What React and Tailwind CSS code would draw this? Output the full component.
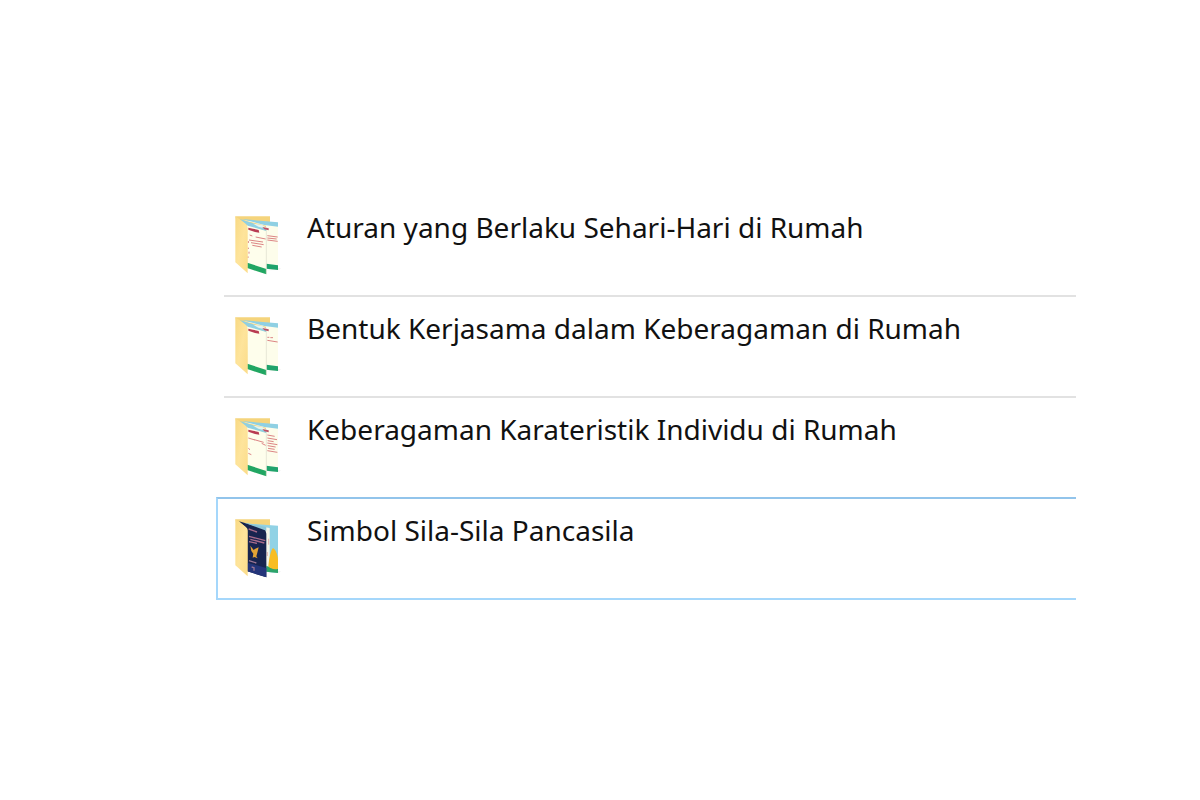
import React from "react";

const folders = [
  { name: "Aturan yang Berlaku Sehari-Hari di Rumah", preview: "rules" },
  { name: "Bentuk Kerjasama dalam Keberagaman di Rumah", preview: "teamwork" },
  { name: "Keberagaman Karateristik Individu di Rumah", preview: "traits" },
  { name: "Simbol Sila-Sila Pancasila", preview: "symbols", selected: true },
];

// Red text marks on the two preview pages
const marks = {
  rules: {
    front: "M74 90l8 3M92 96l30 6M72 105l42 6M78 113l38 6M82 121l28 5M70 108v6M70 128v4M72 140v6M69 154v5",
    back: "M127 92l31 4M127 99l28 3M127 105l31 4",
  },
  teamwork: {
    front: "",
    back: "M127 94h6M136 95h8M127 103l31 5",
  },
  traits: {
    front: "M70 93l20 6M88 98l28 8M110 109l12 6M70 124l5 4M70 139l9 4",
    back: "M127 84l22 4M127 93l29 5M128 101l18 3M127 108l30 5M128 116l24 4M129 124l20 3M127 131l30 5",
  },
};

function PaperPages({ preview }) {
  const { front, back } = marks[preview];
  return (
    <>
      <path d="M56 46L159 53V195L123 191V62Z" fill="#fdfdeb" />
      <path d="M50 42L159 52V65L118 60Z" fill="#8fd0e3" />
      <path d="M124 176L159 181V195L124 191Z" fill="#1fa36c" />
      <path d="M66 58L124 77V208L67 190Z" fill="#fefeec" />
      <path d="M44 42L124 68V78L68 62Z" fill="#8fd0e3" />
      <path d="M84 56L112 60L124 68V71L100 65Z" fill="#e5f4ee" />
      <path d="M112 66L131 70V76L118 73Z" fill="#bd5266" />
      <path d="M67 173L124 192V208L67 189Z" fill="#21a663" />
      <path d="M124 76V207" stroke="#dcdccb" strokeWidth="2" />
      <path d="M70 68L84 71L101 75L103 83L90 81L70 74Z" fill="#b83c52" />
      <path d={front} stroke="#dc8585" strokeWidth="3" fill="none" />
      <path d={back} stroke="#dc8585" strokeWidth="3" fill="none" />
    </>
  );
}

function SymbolPages() {
  return (
    <>
      <path d="M56 46L159 53V195L123 191V62Z" fill="#91d2e5" />
      <path d="M118 57L134 60V178L124 176Z" fill="#f3f5e9" />
      <path d="M124 174L159 182V195L124 191Z" fill="#2da46a" />
      <path d="M130 175C132 152 137 126 144 120C152 123 159 145 159 155V182C149 186 135 182 130 175Z" fill="#f8bd22" />
      <path d="M127 132v12M131 92v18" stroke="#e3b1ae" strokeWidth="3" />
      <path d="M42 40L120 62L124 77V208L67 190V62Z" fill="#17244f" />
      <path d="M58 44L124 57V68Z" fill="#8cc5d8" />
      <path d="M67 164L124 180V208L67 190Z" fill="#24357a" />
      <path d="M71 63l25 9M72 85l49 13M76 94l42 11M72 101l24 5" stroke="#a96c8c" strokeWidth="4" />
      <path d="M76 113l10 13 5 -4 10 -4 -4 16 -3 11 4 6 -10 -4 -5 2 2 -12 -6 -8z" fill="#e2a335" />
      <path d="M72 158l22 7M80 177l7 2v9" stroke="#9c7695" strokeWidth="4" fill="none" />
    </>
  );
}

function FolderIcon({ preview }) {
  return (
    <svg className="h-[62px] w-12 shrink-0" viewBox="30 30 144 186" aria-hidden="true">
      <defs>
        <linearGradient id={`flap-${preview}`} x1="0" y1="0" x2="1" y2="1">
          <stop offset="0" stopColor="#f8d984" />
          <stop offset="0.5" stopColor="#fee49b" />
          <stop offset="1" stopColor="#fbdc8a" />
        </linearGradient>
      </defs>
      <path d="M124 196L158 195L169 191L158 188Z" fill="#f0f0f0" />
      <path d="M31 34H135V190H66Z" fill="#f5d47c" />
      {preview === "symbols" ? <SymbolPages /> : <PaperPages preview={preview} />}
      <path d="M31 34L60 55Q68 60 68 68V205L31 172Z" fill={`url(#flap-${preview})`} />
    </svg>
  );
}

function FolderRow({ folder }) {
  return (
    <li
      className={
        folder.selected
          ? "-mt-0.5 border-y-2 border-l-2 border-t-[#92c4eb] border-b-[#a5d7fb] border-l-[#a5d7fb]"
          : "ml-2 border-b-2 border-[#e2e2e2]"
      }
    >
      <a
        href="#"
        className={
          folder.selected
            ? "flex h-[99px] items-start gap-6 pl-[17px] pt-[19px]"
            : "flex h-[99px] items-start gap-6 pl-[11px] pt-[19px]"
        }
      >
        <FolderIcon preview={folder.preview} />
        <span className="whitespace-nowrap text-[28px] leading-6 text-[#111111]">
          {folder.name}
        </span>
      </a>
    </li>
  );
}

export default function App() {
  return (
    <main className="min-h-screen bg-white pl-[216px] pr-[124px] pt-[196px] font-['Noto_Sans','Open_Sans',sans-serif]">
      <ul>
        {folders.map((folder) => (
          <FolderRow key={folder.name} folder={folder} />
        ))}
      </ul>
    </main>
  );
}
